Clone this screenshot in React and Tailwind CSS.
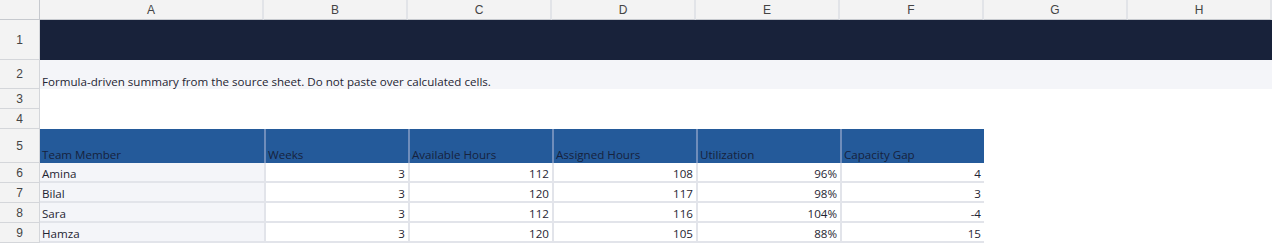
const COLS = ['A', 'B', 'C', 'D', 'E', 'F', 'G', 'H'];

const HEADERS = ['Team Member', 'Weeks', 'Available Hours', 'Assigned Hours', 'Utilization', 'Capacity Gap'];

const ROWS = [
  ['Amina', 3, 112, 108, '96%', 4],
  ['Bilal', 3, 120, 117, '98%', 3],
  ['Sara', 3, 112, 116, '104%', -4],
  ['Hamza', 3, 120, 105, '88%', 15],
];

const font = 'font-["Open_Sans","Noto_Sans",sans-serif]';

const RowHead = ({ n }) => (
  <div className="flex items-center justify-center bg-[#f3f3f3] border-r border-b border-[#d4d6da] text-[12px] text-[#444] font-['Liberation_Sans',Arial,sans-serif]">
    {n}
  </div>
);

const App = () => {
  return (
    <div className="w-[1272px] h-[243px] overflow-hidden bg-white">
      <div className="grid grid-cols-[40px_224px_repeat(7,144px)] grid-rows-[20px_40px_29px_20px_20px_34px_20px_20px_20px_20px]">
        {/* column letters */}
        <div className="bg-[#f3f3f3] border-r border-b border-[#c6c9ce]" />
        {COLS.map((c) => (
          <div
            key={c}
            className="flex items-center justify-center bg-[#f3f3f3] border-r-2 border-b border-[#c6c9ce] border-r-[#e2e4e8] text-[12px] text-[#444] font-['Liberation_Sans',Arial,sans-serif]"
          >
            {c}
          </div>
        ))}

        {/* title band */}
        <RowHead n={1} />
        <div className="col-span-8 bg-[#18223a]" />

        {/* note */}
        <RowHead n={2} />
        <div className={`col-span-8 bg-[#f4f5f9] flex items-end px-[2px] pb-[1px] leading-none text-[11.6px] text-[#1f2533] ${font}`}>
          Formula-driven summary from the source sheet. Do not paste over calculated cells.
        </div>

        <RowHead n={3} />
        <div className="col-span-8 bg-white" />
        <RowHead n={4} />
        <div className="col-span-8 bg-white" />

        {/* table header */}
        <RowHead n={5} />
        {HEADERS.map((h, j) => (
          <div
            key={h}
            className={`flex items-end px-[2px] pb-[2px] leading-none bg-[#245a9a] border-[#6f8dbb] text-[11.6px] font-medium text-[#16223d] ${font} ${
              j === 0 ? '' : 'border-l-2'
            }`}
          >
            {h}
          </div>
        ))}
        <div className="col-span-2 bg-white" />

        {/* body */}
        {ROWS.map((r, i) => (
          <div key={r[0]} className="contents">
            <RowHead n={6 + i} />
            {r.map((v, j) => (
              <div
                key={j}
                className={`flex items-end pb-[1px] leading-none border-b-2 border-[#e2e4ea] text-[11.6px] text-[#1f2533] ${font} ${
                  j === 0 ? 'bg-[#f4f5f9] justify-start px-[2px]' : 'bg-white justify-end px-[3px] border-l-2'
                }`}
              >
                {v}
              </div>
            ))}
            <div className="col-span-2 bg-white" />
          </div>
        ))}
      </div>
    </div>
  );
};

export default App;
